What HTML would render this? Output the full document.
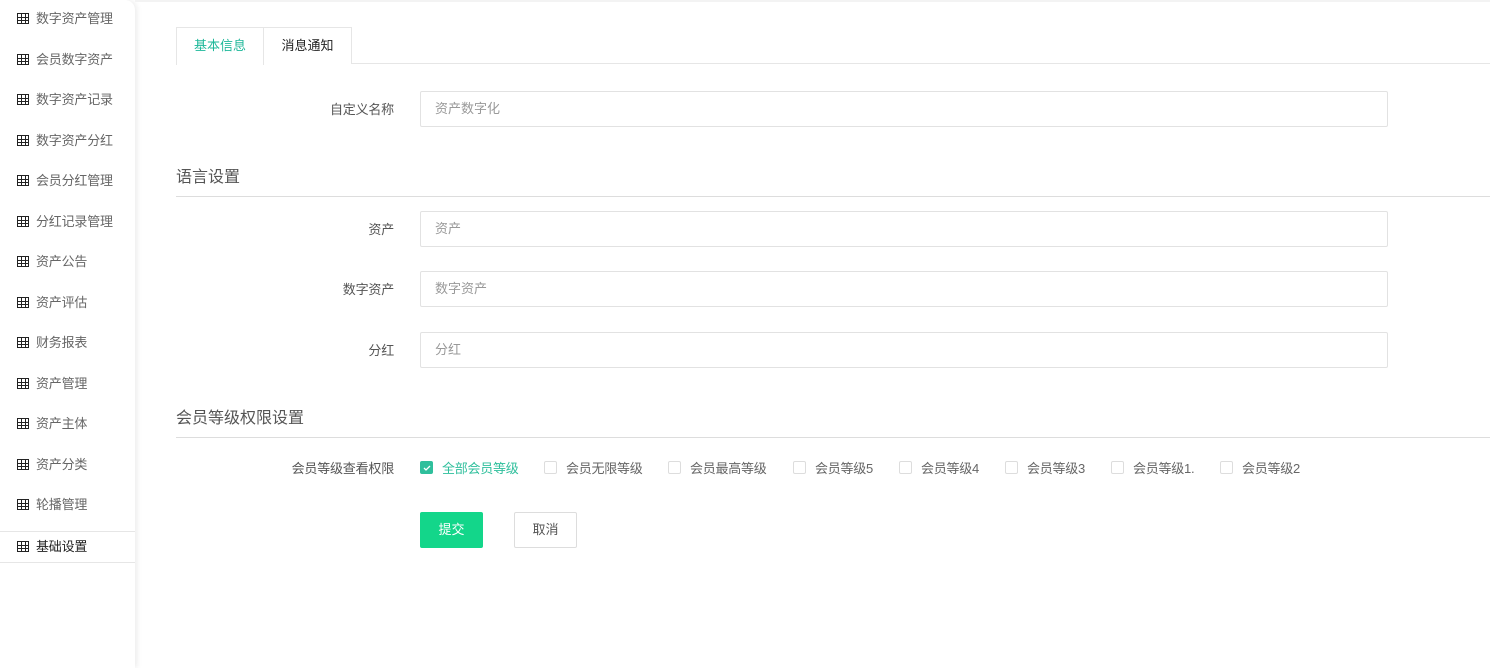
<!DOCTYPE html>
<html><head><meta charset="utf-8"><style>
*{box-sizing:border-box;margin:0;padding:0}
body{width:1490px;height:668px;background:#fff;font-family:"Liberation Sans","Noto Sans CJK SC",sans-serif;font-size:13px;color:#333;position:relative;overflow:hidden}
.side{position:absolute;left:0;top:0;width:135px;height:668px;background:#fff;border-top-right-radius:10px;box-shadow:2px 0 6px rgba(0,0,0,.08)}
.it{position:absolute;left:0;width:135px;height:31px;line-height:31px;padding-left:36px;color:#666;font-size:13px;letter-spacing:-0.2px}
.it i{position:absolute;left:17px;top:10px;width:12px;height:11px;border:1px solid #222;background:linear-gradient(#222,#222) 3px 0/1px 100% no-repeat,linear-gradient(#222,#222) 7px 0/1px 100% no-repeat,linear-gradient(#222,#222) 0 3px/100% 1px no-repeat,linear-gradient(#222,#222) 0 6px/100% 1px no-repeat}
.act{border-top:1px solid #e6e6e6;border-bottom:1px solid #e6e6e6;color:#222}
.topl{position:absolute;left:135px;top:0;right:0;height:2px;background:#f3f3f3}
.tab{position:absolute;top:27px;height:37px;line-height:36px;text-align:center;border:1px solid #e6e6e6;border-bottom:none;background:#fff}
.tline{position:absolute;left:176px;right:0;top:63px;height:1px;background:#e6e6e6}
.lbl{position:absolute;width:220px;left:174px;text-align:right;color:#555;letter-spacing:-0.2px}
.inp{position:absolute;left:420px;width:968px;height:36px;border:1px solid #e2e2e2;border-radius:2px;line-height:34px;padding-left:14px;color:#999}
.sec{position:absolute;left:176px;font-size:16px;color:#555}
.hl{position:absolute;left:176px;right:0;height:1px;background:#ddd}
.cb{position:absolute;top:461px;width:13px;height:13px;border:1px solid #ddd;border-radius:2px;background:#fff}
.cl{position:absolute;top:458px;color:#666;letter-spacing:-0.25px}
.btn{position:absolute;top:512px;height:36px;line-height:34px;text-align:center;border-radius:2px}
</style></head><body>
<div class="side">
<div class="it" style="top:3px"><i></i>数字资产管理</div>
<div class="it" style="top:44px"><i></i>会员数字资产</div>
<div class="it" style="top:84px"><i></i>数字资产记录</div>
<div class="it" style="top:125px"><i></i>数字资产分红</div>
<div class="it" style="top:165px"><i></i>会员分红管理</div>
<div class="it" style="top:206px"><i></i>分红记录管理</div>
<div class="it" style="top:246px"><i></i>资产公告</div>
<div class="it" style="top:287px"><i></i>资产评估</div>
<div class="it" style="top:327px"><i></i>财务报表</div>
<div class="it" style="top:368px"><i></i>资产管理</div>
<div class="it" style="top:408px"><i></i>资产主体</div>
<div class="it" style="top:449px"><i></i>资产分类</div>
<div class="it" style="top:489px"><i></i>轮播管理</div>
<div class="it act" style="top:531px;height:32px;line-height:30px"><i style="top:9px"></i>基础设置</div>
</div>
<div class="topl"></div>
<div class="tline"></div>
<div class="tab" style="left:176px;width:88px;color:#1fb89a;height:38px">基本信息</div>
<div class="tab" style="left:263px;width:89px;color:#222">消息通知</div>
<div class="lbl" style="top:99px">自定义名称</div>
<div class="inp" style="top:91px">资产数字化</div>
<div class="sec" style="top:163px">语言设置</div>
<div class="hl" style="top:196px"></div>
<div class="lbl" style="top:219px">资产</div>
<div class="inp" style="top:211px">资产</div>
<div class="lbl" style="top:279px">数字资产</div>
<div class="inp" style="top:271px">数字资产</div>
<div class="lbl" style="top:340px">分红</div>
<div class="inp" style="top:332px">分红</div>
<div class="sec" style="top:404px">会员等级权限设置</div>
<div class="hl" style="top:437px"></div>
<div class="lbl" style="top:458px">会员等级查看权限</div>
<div class="cb" style="left:420px;background:#2fbf9c;border-color:#2fbf9c"><svg width="11" height="11" style="position:absolute;left:0;top:0"><path d="M3 6l2 2 4-4" stroke="#fff" stroke-width="1.3" fill="none"/></svg></div>
<div class="cl" style="left:442px;color:#2fbf9c">全部会员等级</div>
<div class="cb" style="left:544px"></div><div class="cl" style="left:566px">会员无限等级</div>
<div class="cb" style="left:668px"></div><div class="cl" style="left:690px">会员最高等级</div>
<div class="cb" style="left:793px"></div><div class="cl" style="left:815px">会员等级5</div>
<div class="cb" style="left:899px"></div><div class="cl" style="left:921px">会员等级4</div>
<div class="cb" style="left:1005px"></div><div class="cl" style="left:1027px">会员等级3</div>
<div class="cb" style="left:1111px"></div><div class="cl" style="left:1133px">会员等级1.</div>
<div class="cb" style="left:1220px"></div><div class="cl" style="left:1242px">会员等级2</div>
<div class="btn" style="left:420px;width:63px;background:#13d68a;color:#fff;border:1px solid #13d68a">提交</div>
<div class="btn" style="left:514px;width:63px;border:1px solid #ddd;color:#555">取消</div>
</body></html>
